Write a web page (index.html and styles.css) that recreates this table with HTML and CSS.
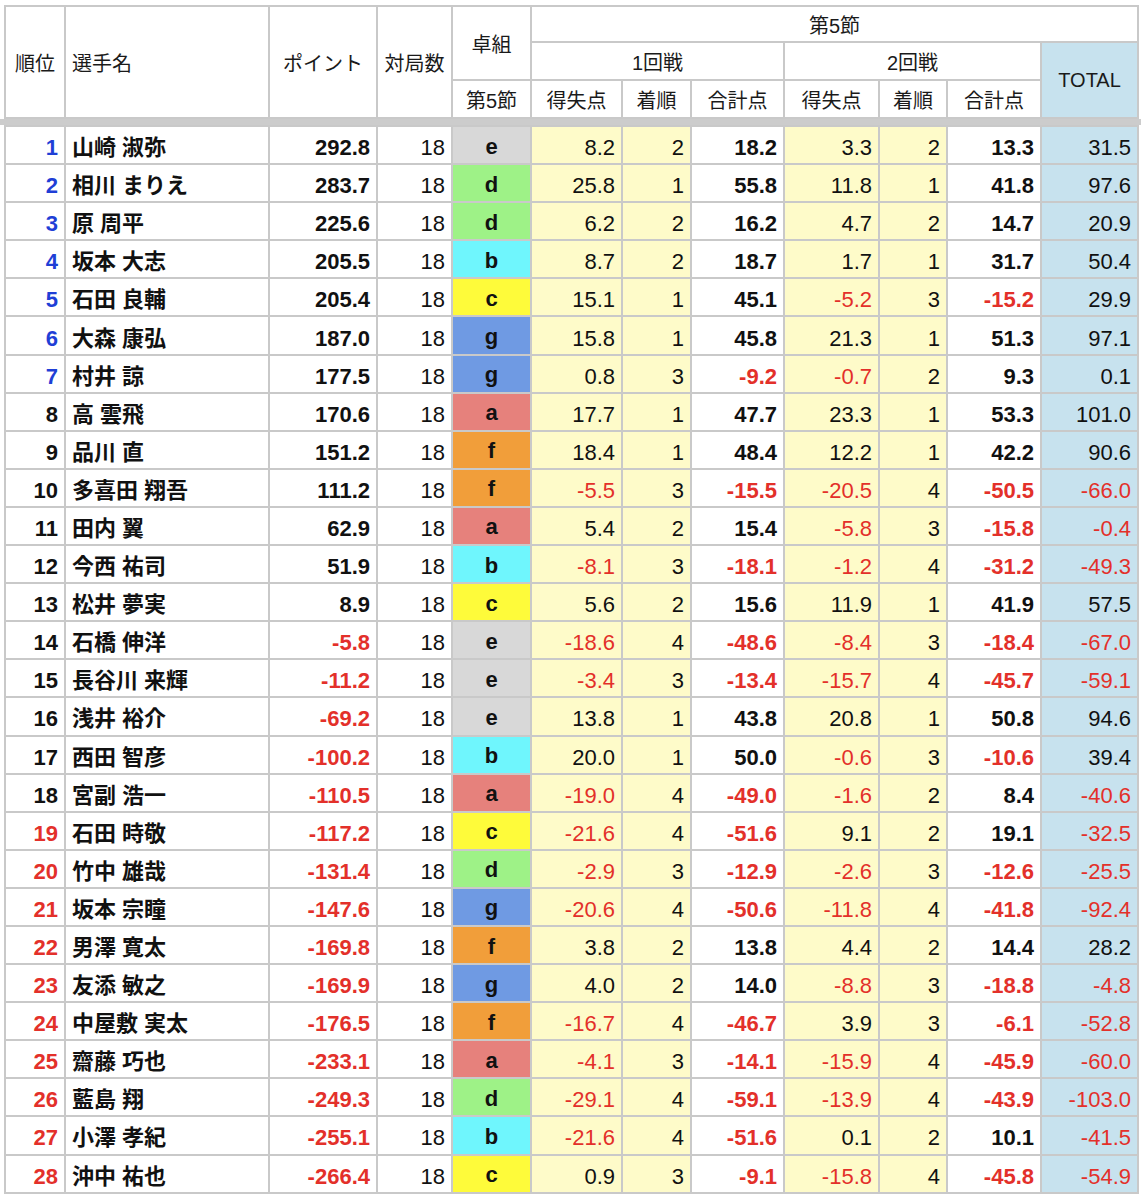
FILE: index.html
```html
<!DOCTYPE html>
<html lang="ja">
<head>
<meta charset="utf-8">
<title>第5節</title>
<link rel="stylesheet" href="styles.css">
</head>
<body>
<div class="sheet">
<table class="grid head">
<colgroup>
<col class="c-rank"><col class="c-name"><col class="c-pt"><col class="c-gm"><col class="c-grp">
<col class="c-s1"><col class="c-o1"><col class="c-t1"><col class="c-s2"><col class="c-o2"><col class="c-t2"><col class="c-tot">
</colgroup>
<tr class="h1">
<th rowspan="3" class="ctr">順位</th>
<th rowspan="3" class="lft">選手名</th>
<th rowspan="3" class="ctr">ポイント</th>
<th rowspan="3" class="ctr">対局数</th>
<th rowspan="2" class="ctr">卓組</th>
<th colspan="7" class="ctr">第5節</th>
</tr>
<tr class="h2">
<th colspan="3" class="ctr">1回戦</th>
<th colspan="3" class="ctr">2回戦</th>
<th rowspan="2" class="ctr tot">TOTAL</th>
</tr>
<tr class="h3">
<th class="ctr">第5節</th>
<th class="ctr">得失点</th>
<th class="ctr">着順</th>
<th class="ctr">合計点</th>
<th class="ctr">得失点</th>
<th class="ctr">着順</th>
<th class="ctr">合計点</th>
</tr>
</table>
<div class="freeze"></div>
<table class="grid body">
<colgroup>
<col class="c-rank"><col class="c-name"><col class="c-pt"><col class="c-gm"><col class="c-grp">
<col class="c-s1"><col class="c-o1"><col class="c-t1"><col class="c-s2"><col class="c-o2"><col class="c-t2"><col class="c-tot">
</colgroup>
<tr><td class="rk blue">1</td><td class="nm">山崎 淑弥</td><td class="pt">292.8</td><td class="gm">18</td><td class="grp g-e">e</td><td class="sc">8.2</td><td class="od">2</td><td class="tt">18.2</td><td class="sc">3.3</td><td class="od">2</td><td class="tt">13.3</td><td class="tot">31.5</td></tr>
<tr><td class="rk blue">2</td><td class="nm">相川 まりえ</td><td class="pt">283.7</td><td class="gm">18</td><td class="grp g-d">d</td><td class="sc">25.8</td><td class="od">1</td><td class="tt">55.8</td><td class="sc">11.8</td><td class="od">1</td><td class="tt">41.8</td><td class="tot">97.6</td></tr>
<tr><td class="rk blue">3</td><td class="nm">原 周平</td><td class="pt">225.6</td><td class="gm">18</td><td class="grp g-d">d</td><td class="sc">6.2</td><td class="od">2</td><td class="tt">16.2</td><td class="sc">4.7</td><td class="od">2</td><td class="tt">14.7</td><td class="tot">20.9</td></tr>
<tr><td class="rk blue">4</td><td class="nm">坂本 大志</td><td class="pt">205.5</td><td class="gm">18</td><td class="grp g-b">b</td><td class="sc">8.7</td><td class="od">2</td><td class="tt">18.7</td><td class="sc">1.7</td><td class="od">1</td><td class="tt">31.7</td><td class="tot">50.4</td></tr>
<tr><td class="rk blue">5</td><td class="nm">石田 良輔</td><td class="pt">205.4</td><td class="gm">18</td><td class="grp g-c">c</td><td class="sc">15.1</td><td class="od">1</td><td class="tt">45.1</td><td class="sc neg">-5.2</td><td class="od">3</td><td class="tt neg">-15.2</td><td class="tot">29.9</td></tr>
<tr><td class="rk blue">6</td><td class="nm">大森 康弘</td><td class="pt">187.0</td><td class="gm">18</td><td class="grp g-g">g</td><td class="sc">15.8</td><td class="od">1</td><td class="tt">45.8</td><td class="sc">21.3</td><td class="od">1</td><td class="tt">51.3</td><td class="tot">97.1</td></tr>
<tr><td class="rk blue">7</td><td class="nm">村井 諒</td><td class="pt">177.5</td><td class="gm">18</td><td class="grp g-g">g</td><td class="sc">0.8</td><td class="od">3</td><td class="tt neg">-9.2</td><td class="sc neg">-0.7</td><td class="od">2</td><td class="tt">9.3</td><td class="tot">0.1</td></tr>
<tr><td class="rk">8</td><td class="nm">高 雲飛</td><td class="pt">170.6</td><td class="gm">18</td><td class="grp g-a">a</td><td class="sc">17.7</td><td class="od">1</td><td class="tt">47.7</td><td class="sc">23.3</td><td class="od">1</td><td class="tt">53.3</td><td class="tot">101.0</td></tr>
<tr><td class="rk">9</td><td class="nm">品川 直</td><td class="pt">151.2</td><td class="gm">18</td><td class="grp g-f">f</td><td class="sc">18.4</td><td class="od">1</td><td class="tt">48.4</td><td class="sc">12.2</td><td class="od">1</td><td class="tt">42.2</td><td class="tot">90.6</td></tr>
<tr><td class="rk">10</td><td class="nm">多喜田 翔吾</td><td class="pt">111.2</td><td class="gm">18</td><td class="grp g-f">f</td><td class="sc neg">-5.5</td><td class="od">3</td><td class="tt neg">-15.5</td><td class="sc neg">-20.5</td><td class="od">4</td><td class="tt neg">-50.5</td><td class="tot neg">-66.0</td></tr>
<tr><td class="rk">11</td><td class="nm">田内 翼</td><td class="pt">62.9</td><td class="gm">18</td><td class="grp g-a">a</td><td class="sc">5.4</td><td class="od">2</td><td class="tt">15.4</td><td class="sc neg">-5.8</td><td class="od">3</td><td class="tt neg">-15.8</td><td class="tot neg">-0.4</td></tr>
<tr><td class="rk">12</td><td class="nm">今西 祐司</td><td class="pt">51.9</td><td class="gm">18</td><td class="grp g-b">b</td><td class="sc neg">-8.1</td><td class="od">3</td><td class="tt neg">-18.1</td><td class="sc neg">-1.2</td><td class="od">4</td><td class="tt neg">-31.2</td><td class="tot neg">-49.3</td></tr>
<tr><td class="rk">13</td><td class="nm">松井 夢実</td><td class="pt">8.9</td><td class="gm">18</td><td class="grp g-c">c</td><td class="sc">5.6</td><td class="od">2</td><td class="tt">15.6</td><td class="sc">11.9</td><td class="od">1</td><td class="tt">41.9</td><td class="tot">57.5</td></tr>
<tr><td class="rk">14</td><td class="nm">石橋 伸洋</td><td class="pt neg">-5.8</td><td class="gm">18</td><td class="grp g-e">e</td><td class="sc neg">-18.6</td><td class="od">4</td><td class="tt neg">-48.6</td><td class="sc neg">-8.4</td><td class="od">3</td><td class="tt neg">-18.4</td><td class="tot neg">-67.0</td></tr>
<tr><td class="rk">15</td><td class="nm">長谷川 来輝</td><td class="pt neg">-11.2</td><td class="gm">18</td><td class="grp g-e">e</td><td class="sc neg">-3.4</td><td class="od">3</td><td class="tt neg">-13.4</td><td class="sc neg">-15.7</td><td class="od">4</td><td class="tt neg">-45.7</td><td class="tot neg">-59.1</td></tr>
<tr><td class="rk">16</td><td class="nm">浅井 裕介</td><td class="pt neg">-69.2</td><td class="gm">18</td><td class="grp g-e">e</td><td class="sc">13.8</td><td class="od">1</td><td class="tt">43.8</td><td class="sc">20.8</td><td class="od">1</td><td class="tt">50.8</td><td class="tot">94.6</td></tr>
<tr><td class="rk">17</td><td class="nm">西田 智彦</td><td class="pt neg">-100.2</td><td class="gm">18</td><td class="grp g-b">b</td><td class="sc">20.0</td><td class="od">1</td><td class="tt">50.0</td><td class="sc neg">-0.6</td><td class="od">3</td><td class="tt neg">-10.6</td><td class="tot">39.4</td></tr>
<tr><td class="rk">18</td><td class="nm">宮副 浩一</td><td class="pt neg">-110.5</td><td class="gm">18</td><td class="grp g-a">a</td><td class="sc neg">-19.0</td><td class="od">4</td><td class="tt neg">-49.0</td><td class="sc neg">-1.6</td><td class="od">2</td><td class="tt">8.4</td><td class="tot neg">-40.6</td></tr>
<tr><td class="rk red">19</td><td class="nm">石田 時敬</td><td class="pt neg">-117.2</td><td class="gm">18</td><td class="grp g-c">c</td><td class="sc neg">-21.6</td><td class="od">4</td><td class="tt neg">-51.6</td><td class="sc">9.1</td><td class="od">2</td><td class="tt">19.1</td><td class="tot neg">-32.5</td></tr>
<tr><td class="rk red">20</td><td class="nm">竹中 雄哉</td><td class="pt neg">-131.4</td><td class="gm">18</td><td class="grp g-d">d</td><td class="sc neg">-2.9</td><td class="od">3</td><td class="tt neg">-12.9</td><td class="sc neg">-2.6</td><td class="od">3</td><td class="tt neg">-12.6</td><td class="tot neg">-25.5</td></tr>
<tr><td class="rk red">21</td><td class="nm">坂本 宗瞳</td><td class="pt neg">-147.6</td><td class="gm">18</td><td class="grp g-g">g</td><td class="sc neg">-20.6</td><td class="od">4</td><td class="tt neg">-50.6</td><td class="sc neg">-11.8</td><td class="od">4</td><td class="tt neg">-41.8</td><td class="tot neg">-92.4</td></tr>
<tr><td class="rk red">22</td><td class="nm">男澤 寛太</td><td class="pt neg">-169.8</td><td class="gm">18</td><td class="grp g-f">f</td><td class="sc">3.8</td><td class="od">2</td><td class="tt">13.8</td><td class="sc">4.4</td><td class="od">2</td><td class="tt">14.4</td><td class="tot">28.2</td></tr>
<tr><td class="rk red">23</td><td class="nm">友添 敏之</td><td class="pt neg">-169.9</td><td class="gm">18</td><td class="grp g-g">g</td><td class="sc">4.0</td><td class="od">2</td><td class="tt">14.0</td><td class="sc neg">-8.8</td><td class="od">3</td><td class="tt neg">-18.8</td><td class="tot neg">-4.8</td></tr>
<tr><td class="rk red">24</td><td class="nm">中屋敷 実太</td><td class="pt neg">-176.5</td><td class="gm">18</td><td class="grp g-f">f</td><td class="sc neg">-16.7</td><td class="od">4</td><td class="tt neg">-46.7</td><td class="sc">3.9</td><td class="od">3</td><td class="tt neg">-6.1</td><td class="tot neg">-52.8</td></tr>
<tr><td class="rk red">25</td><td class="nm">齋藤 巧也</td><td class="pt neg">-233.1</td><td class="gm">18</td><td class="grp g-a">a</td><td class="sc neg">-4.1</td><td class="od">3</td><td class="tt neg">-14.1</td><td class="sc neg">-15.9</td><td class="od">4</td><td class="tt neg">-45.9</td><td class="tot neg">-60.0</td></tr>
<tr><td class="rk red">26</td><td class="nm">藍島 翔</td><td class="pt neg">-249.3</td><td class="gm">18</td><td class="grp g-d">d</td><td class="sc neg">-29.1</td><td class="od">4</td><td class="tt neg">-59.1</td><td class="sc neg">-13.9</td><td class="od">4</td><td class="tt neg">-43.9</td><td class="tot neg">-103.0</td></tr>
<tr><td class="rk red">27</td><td class="nm">小澤 孝紀</td><td class="pt neg">-255.1</td><td class="gm">18</td><td class="grp g-b">b</td><td class="sc neg">-21.6</td><td class="od">4</td><td class="tt neg">-51.6</td><td class="sc">0.1</td><td class="od">2</td><td class="tt">10.1</td><td class="tot neg">-41.5</td></tr>
<tr><td class="rk red">28</td><td class="nm">沖中 祐也</td><td class="pt neg">-266.4</td><td class="gm">18</td><td class="grp g-c">c</td><td class="sc">0.9</td><td class="od">3</td><td class="tt neg">-9.1</td><td class="sc neg">-15.8</td><td class="od">4</td><td class="tt neg">-45.8</td><td class="tot neg">-54.9</td></tr>
</table>
</div>
</body>
</html>
```

FILE: styles.css
```css
html, body {
  margin: 0;
  padding: 0;
  background: #ffffff;
}

body {
  font-family: "Liberation Sans", "Noto Sans CJK JP", sans-serif;
  color: #111111;
}

.sheet {
  padding-top: 5px;
}

.grid {
  border-collapse: collapse;
  table-layout: fixed;
  width: 1135px;
  margin-left: 4px;
}

.grid th,
.grid td {
  border: 2px solid #c9c9c9;
  padding: 0 6px;
  white-space: nowrap;
  overflow: hidden;
}

.c-rank { width: 60px; }
.c-name { width: 204px; }
.c-pt { width: 108px; }
.c-gm { width: 75px; }
.c-grp { width: 79px; }
.c-s1 { width: 91px; }
.c-o1 { width: 69px; }
.c-t1 { width: 93px; }
.c-s2 { width: 95px; }
.c-o2 { width: 68px; }
.c-t2 { width: 94px; }
.c-tot { width: 97px; }

/* header */
.head th {
  font-size: 20px;
  font-weight: normal;
  color: #1a1a1a;
  vertical-align: middle;
}

.head .h1 { height: 36px; }
.head .h2 { height: 38px; }
.head .h3 { height: 38px; }

.head .ctr { text-align: center; }
.head .lft { text-align: left; }
.head .tot { background: #c7e2ee; }

/* frozen pane divider */
.freeze {
  height: 6px;
  background: #cccccc;
}

/* body */
.body tr {
  height: 38.1px;
}

.body td {
  font-size: 22px;
  text-align: right;
  vertical-align: middle;
  line-height: 1;
  padding-top: 6px;
}

.body .rk { font-weight: bold; color: #111111; }
.body .rk.blue { color: #1f3fd6; }
.body .rk.red { color: #e3302a; }

.body .nm {
  text-align: left;
  font-weight: bold;
  color: #111111;
}

.body .pt { font-weight: bold; }

.body .grp {
  text-align: center;
  font-weight: bold;
  padding-top: 3px;
}

.body .sc,
.body .od {
  background: #fefbc9;
}

.body .tt { font-weight: bold; }

.body .tot { background: #c7e2ee; }

.body .neg { color: #e3302a; }

.g-a { background: #e6817c; }
.g-b { background: #6ff6fd; }
.g-c { background: #fefb3a; }
.g-d { background: #9ef287; }
.g-e { background: #d8d8d8; }
.g-f { background: #f19e3a; }
.g-g { background: #6f9ae3; }
```
